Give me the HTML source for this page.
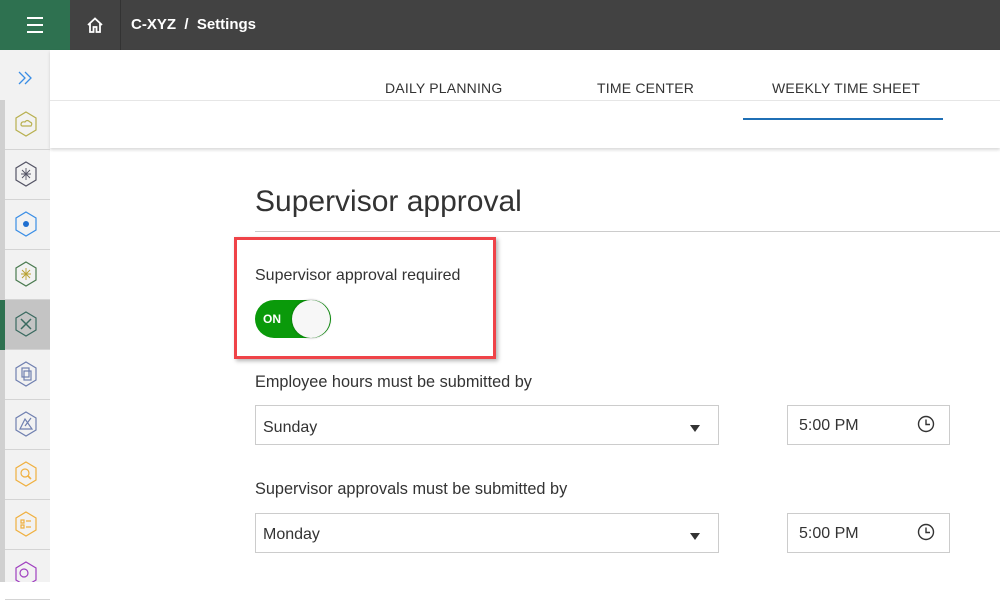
<!DOCTYPE html><html><head><style>
body{margin:0;width:1000px;height:582px;overflow:hidden;font-family:"Liberation Sans",Arial,sans-serif;background:#fff;position:relative;color:#333}
.a{position:absolute}
.top{left:0;top:0;width:1000px;height:50px;background:#424242}
.sb{left:0;top:50px;width:50px;height:532px;background:#f2f2f2}
.it{position:absolute;left:5px;width:45px;height:49px;border-bottom:1px solid #d4d4d4}
.tab{top:80px;font-size:14px;color:#333;letter-spacing:.2px}
.lbl{font-size:16px;color:#333}
.box{border:1px solid #ccc;background:#fff;box-sizing:border-box}
</style></head><body>
<div class="a top"></div>
<div class="a" style="left:0;top:0;width:70px;height:50px;background:#2e7150"></div>
<div class="a" style="left:27px;top:17px;width:16px;height:2px;background:#fff;box-shadow:0 7px 0 #fff,0 14px 0 #fff"></div>
<div class="a" style="left:120px;top:0;width:1px;height:50px;background:#333"></div>
<svg class="a" style="left:86px;top:16px" width="18" height="18" viewBox="0 0 18 18"><path d="M2 9 L9 2.5 L16 9 M4 7.5 V16 H7.5 V11 H10.5 V16 H14 V7.5" fill="none" stroke="#fff" stroke-width="1.8"/></svg>
<div class="a" style="left:131px;top:16px;color:#fff;font-size:15px;font-weight:bold;letter-spacing:0">C-XYZ &nbsp;/ &nbsp;Settings</div>
<div class="a sb"></div>
<div class="a" style="left:0;top:100px;width:5px;height:482px;background:#d0d0d0"></div>
<div class="a" style="left:50px;top:50px;width:950px;height:98px;background:#fff;box-shadow:0 2px 3px rgba(0,0,0,.15)"></div>
<div class="a" style="left:50px;top:100px;width:950px;height:1px;background:#e6e6e6"></div>
<svg class="a" style="left:17px;top:70px" width="16" height="16"><path d="M2 2 L8 8 L2 14 M8 2 L14 8 L8 14" fill="none" stroke="#3a8ee6" stroke-width="1.3"/></svg>
<div class="it" style="top:100px"></div><div class="it" style="top:150px"></div><div class="it" style="top:200px"></div><div class="it" style="top:250px"></div>
<div class="it" style="top:300px;background:#c4c4c4"></div>
<div class="a" style="left:0;top:300px;width:5px;height:50px;background:#2e7150"></div>
<div class="it" style="top:350px"></div><div class="it" style="top:400px"></div><div class="it" style="top:450px"></div><div class="it" style="top:500px"></div><div class="it" style="top:550px"></div>
<svg class="a" style="left:13px;top:110px" width="26" height="472">
<g fill="none" stroke-width="1.2">
<path d="M13 2 L23 8 V20 L13 26 L3 20 V8Z" stroke="#b8b050"/>
<path d="M8 15 Q8 11 12 12 Q14 9 17 12 Q20 13 18 16 H9Z" stroke="#b8b050"/>
<path d="M13 52 L23 58 V70 L13 76 L3 70 V58Z" stroke="#556"/>
<path d="M13 58 V70 M8 64 H18 M9 60 L17 68 M17 60 L9 68" stroke="#556" stroke-width=".9"/>
<path d="M13 102 L23 108 V120 L13 126 L3 120 V108Z" stroke="#3a8ee6"/>
<circle cx="13" cy="114" r="3" fill="#1f6fd0" stroke="none"/>
<path d="M13 152 L23 158 V170 L13 176 L3 170 V158Z" stroke="#4a7a50"/>
<path d="M13 158 V170 M8 164 H18 M9 160 L17 168 M17 160 L9 168" stroke="#b8a030" stroke-width=".9"/>
<path d="M13 202 L23 208 V220 L13 226 L3 220 V208Z" stroke="#3a6a60"/>
<path d="M8 209 L18 219 M18 209 L8 219" stroke="#3a6a60" stroke-width="1.5"/>
<path d="M13 252 L23 258 V270 L13 276 L3 270 V258Z" stroke="#7080b0"/>
<rect x="9" y="258" width="7" height="9" stroke="#7080b0"/><rect x="11" y="261" width="7" height="9" stroke="#7080b0"/>
<path d="M13 302 L23 308 V320 L13 326 L3 320 V308Z" stroke="#7080b0"/>
<path d="M7 319 H19 L12 309Z M12 316 L18 308" stroke="#7080b0"/>
<path d="M13 352 L23 358 V370 L13 376 L3 370 V358Z" stroke="#f0b040"/>
<circle cx="12" cy="363" r="4" stroke="#f0b040"/><path d="M15 366 L18 369" stroke="#f0b040" stroke-width="1.6"/>
<path d="M13 402 L23 408 V420 L13 426 L3 420 V408Z" stroke="#f0b040"/>
<path d="M8 410 H11 V413 H8Z M8 415 H11 V418 H8Z M13 411 H18 M13 417 H18" stroke="#f0b040"/>
<path d="M13 452 L23 458 V470 L13 476 L3 470 V458Z" stroke="#a040c0"/>
<circle cx="11" cy="463" r="4" stroke="#a040c0"/>
</g></svg>
<div class="a tab" style="left:385px">DAILY PLANNING</div>
<div class="a tab" style="left:597px">TIME CENTER</div>
<div class="a tab" style="left:772px">WEEKLY TIME SHEET</div>
<div class="a" style="left:743px;top:118px;width:200px;height:2px;background:#1f6fb5"></div>
<div class="a" style="left:255px;top:185px;font-size:30px;color:#333">Supervisor approval</div>
<div class="a" style="left:255px;top:231px;width:745px;height:1px;background:#ccc"></div>
<div class="a" style="left:234px;top:237px;width:262px;height:122px;box-sizing:border-box;border:3px solid #ef4348;box-shadow:2px 2px 4px rgba(0,0,0,.3)"></div>
<div class="a lbl" style="left:255px;top:267px">Supervisor approval required</div>
<div class="a" style="left:255px;top:300px;width:76px;height:38px;border-radius:19px;background:#0a9a0a"></div>
<div class="a" style="left:263px;top:312px;color:#fff;font-size:12px;font-weight:bold">ON</div>
<div class="a" style="left:292px;top:300px;width:38px;height:38px;border-radius:50%;background:#f7f7f7;box-shadow:0 0 2px rgba(0,0,0,.4)"></div>
<div class="a lbl" style="left:255px;top:373px;font-size:16.3px">Employee hours must be submitted by</div>
<div class="a box" style="left:255px;top:405px;width:464px;height:40px"></div>
<div class="a lbl" style="left:263px;top:419px">Sunday</div>
<div class="a" style="left:690px;top:425px;border-left:5px solid transparent;border-right:5px solid transparent;border-top:7px solid #333"></div>
<div class="a box" style="left:787px;top:405px;width:163px;height:40px"></div>
<div class="a lbl" style="left:799px;top:417px">5:00 PM</div>
<svg class="a" style="left:917px;top:415px" width="18" height="18"><circle cx="9" cy="9" r="7.5" fill="none" stroke="#333" stroke-width="1.4"/><path d="M9 4.5V9.5H13" fill="none" stroke="#333" stroke-width="1.4"/></svg>
<div class="a lbl" style="left:255px;top:480px;font-size:16.3px">Supervisor approvals must be submitted by</div>
<div class="a box" style="left:255px;top:513px;width:464px;height:40px"></div>
<div class="a lbl" style="left:263px;top:526px">Monday</div>
<div class="a" style="left:690px;top:533px;border-left:5px solid transparent;border-right:5px solid transparent;border-top:7px solid #333"></div>
<div class="a box" style="left:787px;top:513px;width:163px;height:40px"></div>
<div class="a lbl" style="left:799px;top:525px">5:00 PM</div>
<svg class="a" style="left:917px;top:523px" width="18" height="18"><circle cx="9" cy="9" r="7.5" fill="none" stroke="#333" stroke-width="1.4"/><path d="M9 4.5V9.5H13" fill="none" stroke="#333" stroke-width="1.4"/></svg>
</body></html>
